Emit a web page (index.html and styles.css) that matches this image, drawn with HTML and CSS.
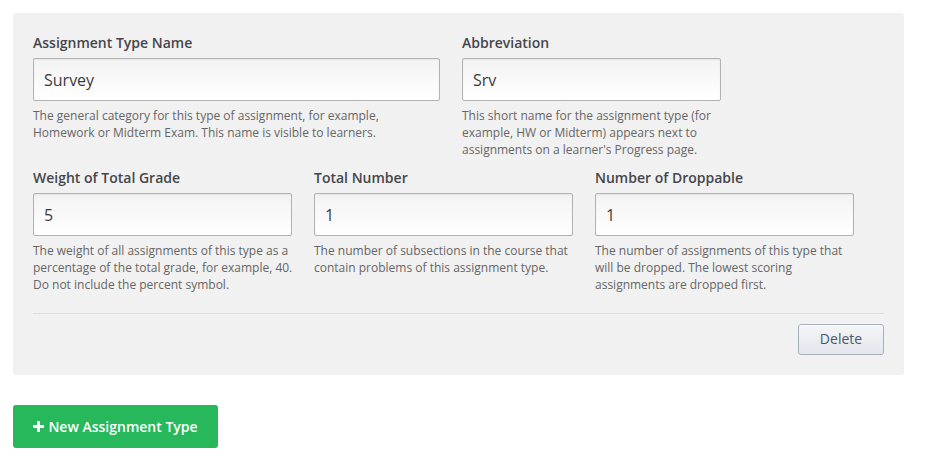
FILE: index.html
```html
<!DOCTYPE html>
<html>
<head>
<meta charset="utf-8">
<link rel="stylesheet" href="styles.css">
</head>
<body>
<div class="page">
  <div class="panel">
    <div class="row">
      <div class="field field-wide">
        <label class="label">Assignment Type Name</label>
        <input class="input" type="text" value="Survey">
        <p class="help">The general category for this type of assignment, for example, Homework or Midterm Exam. This name is visible to learners.</p>
      </div>
      <div class="field">
        <label class="label">Abbreviation</label>
        <input class="input" type="text" value="Srv">
        <p class="help">This short name for the assignment type (for example, HW or Midterm) appears next to assignments on a learner's Progress page.</p>
      </div>
    </div>
    <div class="row">
      <div class="field">
        <label class="label">Weight of Total Grade</label>
        <input class="input" type="text" value="5">
        <p class="help">The weight of all assignments of this type as a percentage of the total grade, for example, 40. Do not include the percent symbol.</p>
      </div>
      <div class="field">
        <label class="label">Total Number</label>
        <input class="input" type="text" value="1">
        <p class="help">The number of subsections in the course that contain problems of this assignment type.</p>
      </div>
      <div class="field">
        <label class="label">Number of Droppable</label>
        <input class="input" type="text" value="1">
        <p class="help">The number of assignments of this type that will be dropped. The lowest scoring assignments are dropped first.</p>
      </div>
    </div>
    <div class="actions">
      <button class="btn-delete" type="button">Delete</button>
    </div>
  </div>
  <button class="btn-new" type="button"><svg class="plus" width="11" height="11" viewBox="0 0 11 11"><path d="M4 0h3v4h4v3H7v4H4V7H0V4h4z" fill="#fff"/></svg>New Assignment Type</button>
</div>
</body>
</html>
```
FILE: styles.css
```css
html, body {
  margin: 0;
  padding: 0;
  background: #fff;
}
body {
  font-family: "Open Sans", "DejaVu Sans", sans-serif;
  color: #3c3c3c;
}
.page {
  padding: 13px;
}
.panel {
  width: 891px;
  box-sizing: border-box;
  background: #f1f1f1;
  border-radius: 3px;
  padding: 20px 20px 20px 20px;
}
.row {
  display: flex;
  gap: 22px;
}
.row + .row {
  margin-top: 10px;
}
.field {
  width: 259px;
  display: flex;
  flex-direction: column;
}
.field-wide {
  width: 407px;
}
.label {
  display: block;
  font-size: 14px;
  font-weight: 600;
  line-height: 20px;
  color: #45464b;
  margin-bottom: 5px;
}
.input {
  box-sizing: border-box;
  width: 100%;
  height: 43px;
  margin: 0;
  padding: 0 10px;
  font-family: "Open Sans", "DejaVu Sans", sans-serif;
  font-size: 16px;
  color: #3c3c3c;
  border: 1px solid #b2b2b2;
  border-radius: 2px;
  background: linear-gradient(to bottom, #f3f3f3, #ffffff);
  box-shadow: inset 0 1px 2px rgba(0,0,0,0.06);
  outline: none;
}
.help {
  margin: 6px -6px 0 0;
  font-size: 12px;
  line-height: 17px;
  color: #666;
}
.field-wide .help {
  margin-right: 0;
}
.actions {
  margin-top: 20px;
  border-top: 1px solid #dedede;
  padding-top: 10px;
  display: flex;
  justify-content: flex-end;
}
.btn-delete {
  width: 86px;
  height: 31px;
  box-sizing: border-box;
  font-family: "Open Sans", "DejaVu Sans", sans-serif;
  font-size: 14px;
  color: #4f5869;
  background: linear-gradient(to bottom, #f4f5f7, #e3e6eb);
  border: 1px solid #a8afbd;
  border-radius: 3px;
  box-shadow: inset 0 1px 0 #fff;
  padding: 0 0 2px 0;
  cursor: pointer;
}
.btn-new {
  margin-top: 30px;
  display: flex;
  align-items: center;
  gap: 4px;
  height: 43px;
  width: 205px;
  box-sizing: border-box;
  justify-content: center;
  background: #26b85a;
  border: none;
  border-radius: 3px;
  color: #fff;
  font-family: "Open Sans", "DejaVu Sans", sans-serif;
  font-size: 14px;
  font-weight: 600;
  padding: 0;
  cursor: pointer;
}
.plus {
  display: block;
}
```
